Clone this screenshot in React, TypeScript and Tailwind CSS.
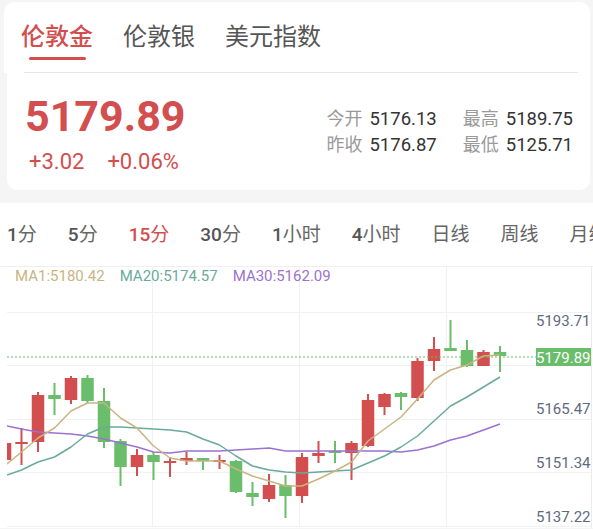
import * as React from "react";

// ============================================================================
// DATA (page-pixel coordinates, read off the chart)
// ============================================================================

type Candle = [up: boolean, bodyTop: number, bodyBottom: number, wickTop: number, wickBottom: number];

const CANDLES: Candle[] = [
  [true, 444, 461, 441, 465],
  [true, 443, 445, 429, 466],
  [true, 396, 443, 393, 453],
  [false, 396, 400, 384, 416],
  [true, 379, 401, 377, 405],
  [false, 379, 402, 376, 404],
  [false, 402, 443, 389, 449],
  [false, 442, 468, 440, 487],
  [true, 456, 468, 450, 477],
  [false, 456, 463, 453, 481],
  [true, 462, 464, 458, 478],
  [true, 459, 462, 453, 466],
  [false, 459, 462, 459, 471],
  [true, 461, 463, 456, 470],
  [false, 462, 493, 461, 494],
  [false, 494, 498, 483, 507],
  [true, 486, 500, 475, 503],
  [false, 486, 497, 476, 519],
  [true, 458, 497, 454, 504],
  [true, 454, 457, 442, 464],
  [false, 452, 454, 442, 464],
  [true, 444, 454, 442, 481],
  [true, 401, 447, 395, 448],
  [true, 395, 408, 394, 416],
  [false, 394, 398, 393, 411],
  [true, 362, 399, 359, 402],
  [true, 350, 362, 338, 372],
  [false, 349, 352, 321, 352],
  [false, 351, 367, 341, 368],
  [true, 353, 367, 351, 367],
  [false, 353, 357, 347, 373],
];

const MA1 = [465, 453, 439, 429, 412, 404, 404, 419, 429, 447, 459, 462, 462, 462, 470, 477, 482, 487, 487, 480, 472, 463, 442, 430, 418, 400, 381, 371, 366, 357, 356];
const MA20 = [476, 471, 463, 458, 448, 435, 428, 428, 429, 430, 431, 433, 440, 446, 457, 467, 471, 473, 474, 473, 472, 471, 464, 457, 448, 437, 422, 407, 398, 388, 378];
const MA30 = [427, 430, 433, 434, 435, 437, 440, 444, 448, 453, 454, 452, 452, 452, 451, 450, 449, 452, 452, 452, 452, 452, 452, 452, 453, 451, 447, 441, 437, 431, 425];

const UP = "#d34e4e";
const DOWN = "#6abd6a";

const cx = (i: number) => 5 + 16.5 * i;
const toPoints = (ys: number[]) => ys.map((y, i) => `${i === 0 ? 7 : cx(i)},${y}`).join(" ");

const PERIODS: [string, string][] = [
  ["1", "分"], ["5", "分"], ["15", "分"], ["30", "分"], ["1", "小时"],
  ["4", "小时"], ["", "日线"], ["", "周线"], ["", "月线"],
];

const FONT = "font-['Roboto','Noto_Sans_CJK_SC',sans-serif]";

// ============================================================================
// PIECES
// ============================================================================

function Stat({ label, value }: { label: string; value: string }) {
  return (
    <div className="flex items-center gap-[7px] leading-[26px]">
      <span className="text-[18px] text-[#9a9a9a]">{label}</span>
      <span className="text-[18.5px] text-[#333]">{value}</span>
    </div>
  );
}

function KChart() {
  return (
    <svg width={593} height={261} viewBox="0 268 593 261" className="block">
      <defs>
        <clipPath id="plot">
          <rect x={7} y={268} width={529} height={261} />
        </clipPath>
      </defs>

      {/* grid */}
      {[152.5, 299.5, 446.5].map((x) => (
        <line key={x} x1={x} x2={x} y1={268} y2={527} stroke="#f1f1f1" />
      ))}
      {[313.5, 366.5, 420.5, 473.5, 527.5].map((y) => (
        <line key={y} x1={7} x2={591} y1={y} y2={y} stroke="#f1f1f1" />
      ))}
      <line x1={591.5} x2={591.5} y1={268} y2={529} stroke="#ececec" />

      <g clipPath="url(#plot)">
        {CANDLES.map(([up, bt, bb, wt, wb], i) => {
          const c = cx(i);
          const color = up ? UP : DOWN;
          return (
            <g key={i}>
              <rect x={c - 1} y={wt} width={2} height={wb - wt} fill={color} />
              <rect x={c - 6.25} y={bt} width={12.5} height={Math.max(bb - bt, 2)} fill={color} />
            </g>
          );
        })}
        <polyline points={toPoints(MA30)} fill="none" stroke="#9b72cf" strokeWidth={1.5} strokeLinejoin="round" />
        <polyline points={toPoints(MA20)} fill="none" stroke="#6aaa9d" strokeWidth={1.5} strokeLinejoin="round" />
        <polyline points={toPoints(MA1)} fill="none" stroke="#c9b482" strokeWidth={1.5} strokeLinejoin="round" />
      </g>

      {/* last price */}
      <line x1={7} x2={536} y1={358} y2={358} stroke={DOWN} strokeDasharray="2 2" />
      <rect x={536} y={349} width={55} height={18} fill={DOWN} />

      <g fontFamily="Roboto, sans-serif" fontSize={15} fill="#5e6a80">
        <text x={536} y={327}>5193.71</text>
        <text x={536} y={364} fill="#fff">5179.89</text>
        <text x={536} y={415}>5165.47</text>
        <text x={536} y={469}>5151.34</text>
        <text x={536} y={523}>5137.22</text>
      </g>
    </svg>
  );
}

// ============================================================================
// APP
// ============================================================================

export default function App() {
  return (
    <div className={`w-[593px] h-[529px] overflow-hidden bg-[#f5f5f5] ${FONT}`}>
      {/* symbol tabs */}
      <div className="mt-[2px] ml-[4px] mr-[3px] h-[70px] bg-white rounded-t-[10px] flex gap-[30px] pl-[17px] pt-[23px]">
        <div className="flex flex-col items-center">
          <span className="text-[24px] leading-[24px] font-medium text-[#d34e4e]">伦敦金</span>
          <span className="mt-[8px] w-[57px] h-[3px] rounded-full bg-[#d34e4e]" />
        </div>
        <span className="text-[24px] leading-[24px] text-[#555]">伦敦银</span>
        <span className="text-[24px] leading-[24px] text-[#555]">美元指数</span>
      </div>
      <div className="ml-[4px] mr-[3px] bg-white">
        <div className="ml-[20px] mr-[12px] h-px bg-[#e6e6e6]" />
      </div>

      {/* quote */}
      <div className="ml-[7px] mr-[3px] h-[117px] bg-white rounded-b-[10px] flex justify-between pl-[18px] pr-[17px] pt-[22px]">
        <div>
          <div className="text-[43px] leading-[43px] font-bold text-[#d34e4e]">5179.89</div>
          <div className="mt-[12px] flex gap-[23px] text-[22px] leading-[24px] text-[#d34e4e] pl-[4px]">
            <span>+3.02</span>
            <span>+0.06%</span>
          </div>
        </div>
        <div className="mt-[11px] grid grid-cols-[auto_auto] gap-x-[26px] self-start">
          <Stat label="今开" value="5176.13" />
          <Stat label="最高" value="5189.75" />
          <Stat label="昨收" value="5176.87" />
          <Stat label="最低" value="5125.71" />
        </div>
      </div>

      {/* chart */}
      <div className="mt-[13px] bg-white">
        <div className="h-[64px] pt-[1px] flex items-center gap-[31px] pl-[7px] whitespace-nowrap overflow-hidden border-b border-[#efefef] text-[19px]">
          {PERIODS.map(([num, cn], i) => (
            <span key={i} className={i === 2 ? "text-[#d34e4e]" : "text-[#555]"}>
              {num && <span className="font-medium">{num}</span>}
              <span className={i === 2 ? "" : "text-[#666]"}>{cn}</span>
            </span>
          ))}
        </div>
        <div className="relative">
          <KChart />
          <div className="absolute top-0 left-[15px] flex gap-[15px] text-[15px] leading-[18px]">
            <span className="text-[#c9b482]">MA1:5180.42</span>
            <span className="text-[#6aaa9d]">MA20:5174.57</span>
            <span className="text-[#9b72cf]">MA30:5162.09</span>
          </div>
        </div>
      </div>
    </div>
  );
}
